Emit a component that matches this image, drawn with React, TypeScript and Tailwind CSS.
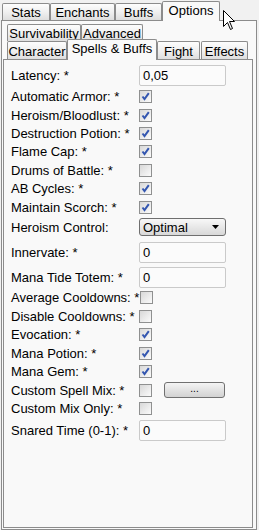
import React from "react";

const FONT = "font-['Liberation_Sans',Arial,sans-serif]";

function Tab({ label, w, selected, h }: { label: string; w: number; selected?: boolean; h: number }) {
  if (selected) {
    return (
      <div
        style={{ width: w, height: h }}
        className="relative z-10 -mb-px flex-none flex items-start justify-center pt-[2px] border border-b-0 border-[#8c8c8c] rounded-t-[2px] bg-[#f9f9f9] text-black"
      >
        {label}
      </div>
    );
  }
  return (
    <div
      style={{ width: w, height: h }}
      className="flex-none flex items-center justify-center pt-[1px] border border-b-0 border-[#8c8c8c] rounded-t-[2px] bg-gradient-to-b from-[#fdfdfd] via-[#f0f0f0] to-[#dedede] text-black"
    >
      {label}
    </div>
  );
}

function Check({ checked }: { checked: boolean }) {
  return (
    <div className="w-[13px] h-[13px] border border-[#8f9090] bg-gradient-to-br from-[#d8d8d8] to-[#fbfbfb] flex items-center justify-center flex-none">
      {checked && (
        <svg width="11" height="11" viewBox="0 0 11 11">
          <path d="M2.5 5.5 L4.5 8 L8.8 2.2" fill="none" stroke="#3356b0" strokeWidth="2" strokeLinejoin="miter" />
        </svg>
      )}
    </div>
  );
}

function TextInput({ value }: { value: string }) {
  return (
    <div className="w-[87px] h-[21px] border border-[#cacaca] rounded-[2px] bg-[#fbfbfb] flex items-center pl-[3px]">
      {value}
    </div>
  );
}

type RowDef = { label: string; h: number; ctrl: React.ReactNode };

function Row({ label, h, ctrl }: RowDef) {
  return (
    <div style={{ height: h }} className="flex items-center">
      <div className="w-[128px] flex-none whitespace-nowrap">{label}</div>
      {ctrl}
    </div>
  );
}

export default function App() {
  const rows: RowDef[] = [
    { label: "Latency: *", h: 22, ctrl: <TextInput value="0,05" /> },
    { label: "Automatic Armor: *", h: 20, ctrl: <Check checked /> },
    { label: "Heroism/Bloodlust: *", h: 18, ctrl: <Check checked /> },
    { label: "Destruction Potion: *", h: 18, ctrl: <Check checked /> },
    { label: "Flame Cap: *", h: 19, ctrl: <Check checked /> },
    { label: "Drums of Battle: *", h: 18, ctrl: <Check checked={false} /> },
    { label: "AB Cycles: *", h: 19, ctrl: <Check checked /> },
    { label: "Maintain Scorch: *", h: 18, ctrl: <Check checked /> },
    {
      label: "Heroism Control:",
      h: 22,
      ctrl: (
        <div className="w-[87px] h-[18px] border border-[#6f6f6f] rounded-[3px] bg-gradient-to-b from-[#f8f8f8] to-[#d8d8d8] flex items-center pl-[3px] pr-[6px] justify-between">
          <span>Optimal</span>
          <svg width="7" height="4" viewBox="0 0 7 4">
            <path d="M0 0 L7 0 L3.5 4 Z" fill="#000" />
          </svg>
        </div>
      ),
    },
    { label: "Innervate: *", h: 29, ctrl: <TextInput value="0" /> },
    { label: "Mana Tide Totem: *", h: 20, ctrl: <TextInput value="0" /> },
    { label: "Average Cooldowns: *", h: 20, ctrl: <div className="ml-[1px]"><Check checked={false} /></div> },
    { label: "Disable Cooldowns: *", h: 18, ctrl: <Check checked={false} /> },
    { label: "Evocation: *", h: 19, ctrl: <Check checked /> },
    { label: "Mana Potion: *", h: 18, ctrl: <Check checked /> },
    { label: "Mana Gem: *", h: 19, ctrl: <Check checked /> },
    {
      label: "Custom Spell Mix: *",
      h: 18,
      ctrl: (
        <div className="flex items-center">
          <Check checked={false} />
          <div className="ml-[12px] w-[61px] h-[16px] border border-[#707070] rounded-[3px] bg-gradient-to-b from-[#f4f4f4] to-[#d2d2d2] flex items-center justify-center text-[10px] leading-none pb-[2px]">
            ...
          </div>
        </div>
      ),
    },
    { label: "Custom Mix Only: *", h: 19, ctrl: <Check checked={false} /> },
    { label: "Snared Time (0-1): *", h: 24, ctrl: <TextInput value="0" /> },
  ];

  return (
    <div className={`${FONT} relative w-[259px] h-[530px] bg-[#f1f1f1] text-[13px] leading-none text-black overflow-hidden`}>
      {/* outer tabs */}
      <div className="flex items-end h-[20px] pl-[2px]">
        <Tab label="Stats" w={48} h={17} />
        <Tab label="Enchants" w={65} h={17} />
        <Tab label="Buffs" w={47} h={17} />
        <Tab label="Options" w={58} h={20} selected />
      </div>
      {/* outer panel */}
      <div className="ml-[1px] w-[256px] h-[510px] border border-[#8c8c8c] bg-[#f9f9f9] pt-[3px] pl-[1px]">
        {/* inner tab control */}
        <div className="w-[250px]">
          <div className="flex items-end h-[17px] pl-[4px]">
            <Tab label="Survivability" w={74} h={17} />
            <Tab label="Advanced" w={62} h={17} />
          </div>
          <div className="flex items-end h-[20px] -mt-[2px] pl-[4px] relative">
            <Tab label="Character" w={60} h={18} />
            <Tab label="Spells & Buffs" w={90} h={21} selected />
            <Tab label="Fight" w={43} h={18} />
            <div className="w-[1px] flex-none" />
            <Tab label="Effects" w={47} h={18} />
          </div>
          <div className="h-[469px] border border-[#8c8c8c] bg-[#f9f9f9] pt-[4px] pl-[7px]">
            {rows.map((r) => (
              <Row key={r.label} {...r} />
            ))}
          </div>
        </div>
      </div>
      {/* mouse cursor */}
      <svg className="absolute left-[223px] top-[10px]" width="13" height="21" viewBox="0 0 13 21">
        <path
          d="M0.5 0.5 L0.5 16.5 L4.5 12.5 L7.5 19.5 L9.5 18.5 L6.5 11.5 L11.5 11.5 Z"
          fill="#fff"
          stroke="#000"
          strokeWidth="1"
          strokeLinejoin="miter"
        />
      </svg>
    </div>
  );
}
